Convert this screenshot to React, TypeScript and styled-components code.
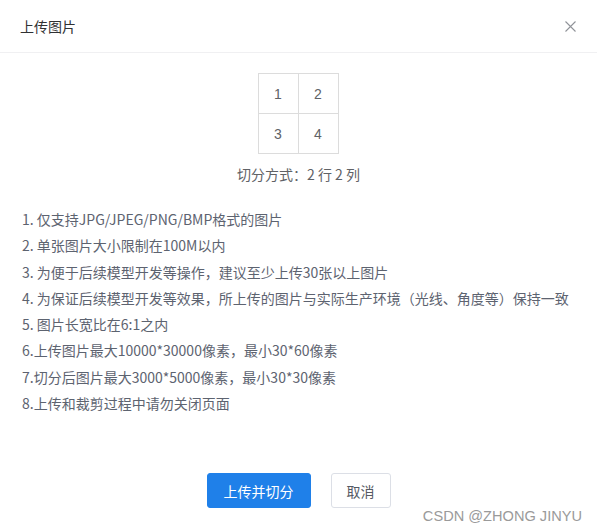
import React from "react";
import styled, { createGlobalStyle } from "styled-components";

const GlobalStyle = createGlobalStyle`
  html, body {
    margin: 0;
    padding: 0;
    background: #fff;
  }
  body {
    font-family: "Noto Sans CJK SC", "Noto Sans", sans-serif;
  }
`;

const Dialog = styled.div`
  position: relative;
  width: 597px;
  height: 530px;
  background: #fff;
  display: flex;
  flex-direction: column;
  overflow: hidden;
`;

const Header = styled.div`
  height: 53px;
  box-sizing: border-box;
  padding: 0 20px;
  display: flex;
  align-items: center;
  justify-content: space-between;
  border-bottom: 1px solid #f0f0f2;
`;

const Title = styled.span`
  font-size: 14px;
  color: #303133;
  line-height: 1;
`;

const CloseBtn = styled.button`
  border: none;
  background: none;
  padding: 0;
  width: 12px;
  height: 12px;
  margin-right: 1px;
  display: flex;
  align-items: center;
  justify-content: center;
  cursor: pointer;
`;

const Body = styled.div`
  padding: 20px 22px 0;
  flex: 1;
  display: flex;
  flex-direction: column;
`;

const Preview = styled.div`
  display: flex;
  flex-direction: column;
  align-items: center;
`;

const Grid = styled.div<{ cols: number }>`
  display: grid;
  grid-template-columns: repeat(${(p) => p.cols}, 40px);
  border-top: 1px solid #dcdcdc;
  border-left: 1px solid #dcdcdc;
  margin-left: -1px;
`;

const Cell = styled.div`
  width: 40px;
  height: 40px;
  box-sizing: border-box;
  border-right: 1px solid #dcdcdc;
  border-bottom: 1px solid #dcdcdc;
  display: flex;
  align-items: center;
  justify-content: center;
  font-family: "Liberation Sans", Arial, sans-serif;
  font-size: 14px;
  color: #606266;
`;

const Caption = styled.div`
  margin-top: 11px;
  font-size: 14px;
  color: #606266;
  line-height: 19px;
`;

const Rules = styled.ol`
  list-style: none;
  margin: 22px 0 0;
  padding: 0;
`;

const Rule = styled.li`
  font-size: 14px;
  line-height: 26.3px;
  color: #5d6370;
  white-space: nowrap;
`;

const Footer = styled.div`
  margin-top: auto;
  padding-bottom: 22px;
  display: flex;
  justify-content: center;
  gap: 20px;
`;

const Button = styled.button<{ primary?: boolean }>`
  height: 35px;
  padding: 0 ${(p) => (p.primary ? 16 : 15)}px;
  border-radius: 3px;
  font-family: "Noto Sans CJK SC", sans-serif;
  font-size: 14px;
  cursor: pointer;
  border: 1px solid ${(p) => (p.primary ? "#1f80e9" : "#dcdfe6")};
  background: ${(p) => (p.primary ? "#1f80e9" : "#fff")};
  color: ${(p) => (p.primary ? "#fff" : "#555a63")};
`;

const Watermark = styled.div`
  position: absolute;
  right: 15px;
  bottom: 6px;
  font-family: "Liberation Sans", Arial, sans-serif;
  font-size: 14.6px;
  color: #9a9a9a;
  pointer-events: none;
`;

const rules = [
  "1. 仅支持JPG/JPEG/PNG/BMP格式的图片",
  "2. 单张图片大小限制在100M以内",
  "3. 为便于后续模型开发等操作，建议至少上传30张以上图片",
  "4. 为保证后续模型开发等效果，所上传的图片与实际生产环境（光线、角度等）保持一致",
  "5. 图片长宽比在6:1之内",
  "6.上传图片最大10000*30000像素，最小30*60像素",
  "7.切分后图片最大3000*5000像素，最小30*30像素",
  "8.上传和裁剪过程中请勿关闭页面",
];

export default function App() {
  const rows = 2;
  const cols = 2;
  const cells = Array.from({ length: rows * cols }, (_, i) => i + 1);

  return (
    <>
      <GlobalStyle />
      <Dialog>
        <Header>
          <Title>上传图片</Title>
          <CloseBtn aria-label="关闭">
            <svg width="11" height="11" viewBox="0 0 11 11">
              <path d="M0.5 0.5 L10.5 10.5 M10.5 0.5 L0.5 10.5" stroke="#909399" strokeWidth="1.1" />
            </svg>
          </CloseBtn>
        </Header>
        <Body>
          <Preview>
            <Grid cols={cols}>
              {cells.map((n) => (
                <Cell key={n}>{n}</Cell>
              ))}
            </Grid>
            <Caption>
              切分方式：{rows} 行 {cols} 列
            </Caption>
          </Preview>
          <Rules>
            {rules.map((r) => (
              <Rule key={r}>{r}</Rule>
            ))}
          </Rules>
        </Body>
        <Footer>
          <Button primary>上传并切分</Button>
          <Button>取消</Button>
        </Footer>
        <Watermark>CSDN @ZHONG JINYU</Watermark>
      </Dialog>
    </>
  );
}
